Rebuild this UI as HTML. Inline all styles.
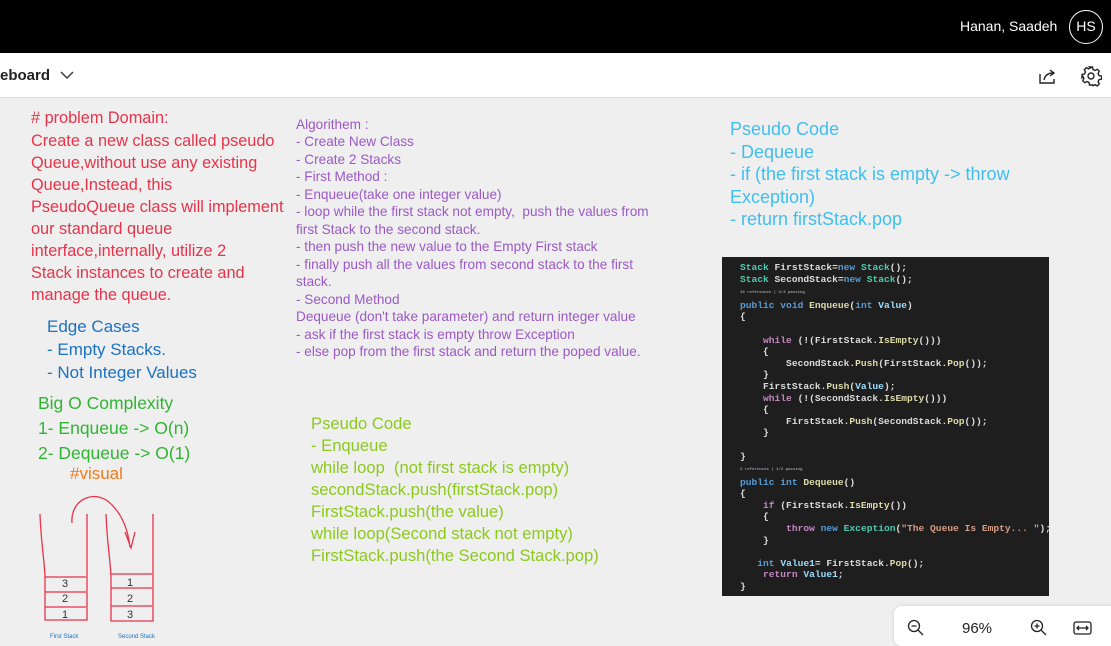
<!DOCTYPE html>
<html><head><meta charset="utf-8"><style>
*{margin:0;padding:0;box-sizing:border-box}
body{width:1111px;height:639px;overflow:hidden;background:#efefef;font-family:"Liberation Sans",sans-serif;position:relative}
.t{position:absolute;white-space:nowrap;line-height:1}
.r{color:#e8334a;font-size:16.3px}
.p{color:#9b59c6;font-size:13.6px}
.c{color:#3fbff0;font-size:18px}
.g{color:#8cc91e;font-size:16.6px}
.b{color:#1a72c4;font-size:17px}
.gr{color:#2fb532;font-size:17.5px}
pre{font-family:"Liberation Mono",monospace;font-size:9.6px;line-height:11.6px;color:#dcdcdc;font-weight:bold}
.k{color:#569cd6}.ty{color:#4ec9b0}.f{color:#dcdcaa}.v{color:#9cdcfe}.s{color:#d69d85}.m{color:#c586c0}
</style></head><body>
<div style="position:absolute;left:0;top:0;width:1111px;height:53px;background:#000"></div>
<div class="t" style="left:960px;top:19px;color:#fff;font-size:14px">Hanan, Saadeh</div>
<div style="position:absolute;left:1069px;top:10px;width:34px;height:34px;border:1.5px solid #fff;border-radius:50%;color:#fff;font-size:14px;text-align:center;line-height:31px">HS</div>
<div style="position:absolute;left:0;top:53px;width:1111px;height:45px;background:#fff;border-bottom:1px solid #ddd"></div>
<div class="t" style="left:0;top:68px;font-size:15px;font-weight:bold;color:#222">eboard</div>
<svg style="position:absolute;left:60px;top:70px" width="14" height="10"><path d="M1 2l6 6 6-6" fill="none" stroke="#333" stroke-width="1.4"/></svg>
<svg style="position:absolute;left:1037px;top:66px" width="20" height="20" fill="none" stroke="#222" stroke-width="1.4"><path d="M3 8v9h14v-4"/><path d="M7 14c1-5 4-7 9-7M13 4l4 3-4 3"/></svg>
<svg style="position:absolute;left:1080px;top:65px" width="22" height="22" fill="none" stroke="#222" stroke-width="1.4"><circle cx="11" cy="11" r="3"/><path d="M9.5 2h3l.5 2.5 2 1 2.3-1.2 2 2-1.2 2.3 1 2 2.5.5v3l-2.5.5-1 2 1.2 2.3-2 2-2.3-1.2-2 1L12.5 20h-3l-.5-2.5-2-1-2.3 1.2-2-2 1.2-2.3-1-2L2 12.5v-3l2.5-.5 1-2-1.2-2.3 2-2 2.3 1.2 2-1z"/></svg>

<div class="t r" style="left:31px;top:110px"># problem Domain:</div>
<div class="t r" style="left:31px;top:133px">Create a new class called pseudo</div>
<div class="t r" style="left:31px;top:155px">Queue,without use any existing</div>
<div class="t r" style="left:31px;top:177px">Queue,Instead, this</div>
<div class="t r" style="left:31px;top:199px">PseudoQueue class will implement</div>
<div class="t r" style="left:31px;top:221px">our standard queue</div>
<div class="t r" style="left:31px;top:243px">interface,internally, utilize 2</div>
<div class="t r" style="left:31px;top:265px">Stack instances to create and</div>
<div class="t r" style="left:31px;top:287px">manage the queue.</div>

<div class="t b" style="left:47px;top:318px">Edge Cases</div>
<div class="t b" style="left:47px;top:341px">- Empty Stacks.</div>
<div class="t b" style="left:47px;top:364px">- Not Integer Values</div>
<div class="t gr" style="left:38px;top:395px">Big O Complexity</div>
<div class="t gr" style="left:38px;top:420px">1- Enqueue -&gt; O(n)</div>
<div class="t gr" style="left:38px;top:445px">2- Dequeue -&gt; O(1)</div>
<div class="t" style="left:70px;top:465px;color:#f07a1a;font-size:17px">#visual</div>

<svg style="position:absolute;left:0;top:480px" width="200" height="159" fill="none" stroke="#e8334a" stroke-width="1.3">
<path d="M40 34c1 30 5 50 5 65v41h42V34"/><path d="M45 97h41M45 112h41M45 127h41"/>
<path d="M106 34c1 30 5 50 5 65v42h42V34"/><path d="M111 94h41M111 108h41M111 126h41"/>
<path d="M72 43c-2-25 25-35 40-18 10 10 16 25 18 42M125 52l6 16 4-16"/>
<text x="62" y="107" fill="#333" stroke="none" font-size="11" font-family="Liberation Sans">3</text>
<text x="62" y="122" fill="#333" stroke="none" font-size="11" font-family="Liberation Sans">2</text>
<text x="62" y="138" fill="#333" stroke="none" font-size="11" font-family="Liberation Sans">1</text>
<text x="127" y="106" fill="#333" stroke="none" font-size="11" font-family="Liberation Sans">1</text>
<text x="127" y="122" fill="#333" stroke="none" font-size="11" font-family="Liberation Sans">2</text>
<text x="127" y="138" fill="#333" stroke="none" font-size="11" font-family="Liberation Sans">3</text>
<text x="50" y="158" fill="#1a72c4" stroke="none" font-size="6" font-family="Liberation Sans">First Stack</text>
<text x="118" y="158" fill="#1a72c4" stroke="none" font-size="6" font-family="Liberation Sans">Second Stack</text>
</svg>

<div class="t p" style="left:296px;top:118px">Algorithem :</div>
<div class="t p" style="left:296px;top:135px">- Create New Class</div>
<div class="t p" style="left:296px;top:153px">- Create 2 Stacks</div>
<div class="t p" style="left:296px;top:170px">- First Method :</div>
<div class="t p" style="left:296px;top:188px">- Enqueue(take one integer value)</div>
<div class="t p" style="left:296px;top:205px">- loop while the first stack not empty,&nbsp; push the values from</div>
<div class="t p" style="left:296px;top:223px">first Stack to the second stack.</div>
<div class="t p" style="left:296px;top:240px">- then push the new value to the Empty First stack</div>
<div class="t p" style="left:296px;top:258px">- finally push all the values from second stack to the first</div>
<div class="t p" style="left:296px;top:275px">stack.</div>
<div class="t p" style="left:296px;top:293px">- Second Method</div>
<div class="t p" style="left:296px;top:310px">Dequeue (don't take parameter) and return integer value</div>
<div class="t p" style="left:296px;top:328px">- ask if the first stack is empty throw Exception</div>
<div class="t p" style="left:296px;top:345px">- else pop from the first stack and return the poped value.</div>

<div class="t c" style="left:730px;top:120px">Pseudo Code</div>
<div class="t c" style="left:730px;top:143px">- Dequeue</div>
<div class="t c" style="left:730px;top:165px">- if (the first stack is empty -&gt; throw</div>
<div class="t c" style="left:730px;top:188px">Exception)</div>
<div class="t c" style="left:730px;top:210px">- return firstStack.pop</div>

<div class="t g" style="left:311px;top:416px">Pseudo Code</div>
<div class="t g" style="left:311px;top:438px">- Enqueue</div>
<div class="t g" style="left:311px;top:460px">while loop&nbsp; (not first stack is empty)</div>
<div class="t g" style="left:311px;top:482px">secondStack.push(firstStack.pop)</div>
<div class="t g" style="left:311px;top:504px">FirstStack.push(the value)</div>
<div class="t g" style="left:311px;top:526px">while loop(Second stack not empty)</div>
<div class="t g" style="left:311px;top:548px">FirstStack.push(the Second Stack.pop)</div>

<div style="position:absolute;left:722px;top:257px;width:327px;height:339px;background:#1e1e1e;padding:5px 0 0 18px;overflow:hidden">
<pre><span class="ty">Stack</span> FirstStack=<span class="k">new</span> <span class="ty">Stack</span>();
<span class="ty">Stack</span> SecondStack=<span class="k">new</span> <span class="ty">Stack</span>();
<span style="font-size:4px;color:#999">10 references | 4/4 passing</span>
<span class="k">public void</span> <span class="f">Enqueue</span>(<span class="k">int</span> <span class="v">Value</span>)
{

    <span class="m">while</span> (!(FirstStack.<span class="f">IsEmpty</span>()))
    {
        SecondStack.<span class="f">Push</span>(FirstStack.<span class="f">Pop</span>());
    }
    FirstStack.<span class="f">Push</span>(<span class="v">Value</span>);
    <span class="m">while</span> (!(SecondStack.<span class="f">IsEmpty</span>()))
    {
        FirstStack.<span class="f">Push</span>(SecondStack.<span class="f">Pop</span>());
    }

}
<span style="font-size:4px;color:#999">2 references | 1/2 passing</span>
<span class="k">public int</span> <span class="f">Dequeue</span>()
{
    <span class="m">if</span> (FirstStack.<span class="f">IsEmpty</span>())
    {
        <span class="m">throw</span> <span class="k">new</span> <span class="ty">Exception</span>(<span class="s">"The Queue Is Empty... "</span>);
    }

   <span class="k">int</span> <span class="v">Value1</span>= FirstStack.<span class="f">Pop</span>();
    <span class="m">return</span> <span class="v">Value1</span>;
}</pre></div>

<div style="position:absolute;left:894px;top:606px;width:230px;height:40px;background:#fff;border-radius:8px;box-shadow:0 0 4px rgba(0,0,0,.12)"></div>
<svg style="position:absolute;left:907px;top:619px" width="18" height="18" fill="none" stroke="#222" stroke-width="1.3"><circle cx="7" cy="7" r="5.5"/><path d="M4.5 7h5M11 11l5 5"/></svg>
<div class="t" style="left:962px;top:621px;font-size:15px;color:#222">96%</div>
<svg style="position:absolute;left:1030px;top:619px" width="18" height="18" fill="none" stroke="#222" stroke-width="1.3"><circle cx="7" cy="7" r="5.5"/><path d="M4.5 7h5M7 4.5v5M11 11l5 5"/></svg>
<svg style="position:absolute;left:1073px;top:620px" width="20" height="16" fill="none" stroke="#222" stroke-width="1.3"><rect x="1" y="2" width="17" height="12" rx="2"/><path d="M4 8h11M6 6l-2 2 2 2M13 6l2 2-2 2"/></svg>
</body></html>
